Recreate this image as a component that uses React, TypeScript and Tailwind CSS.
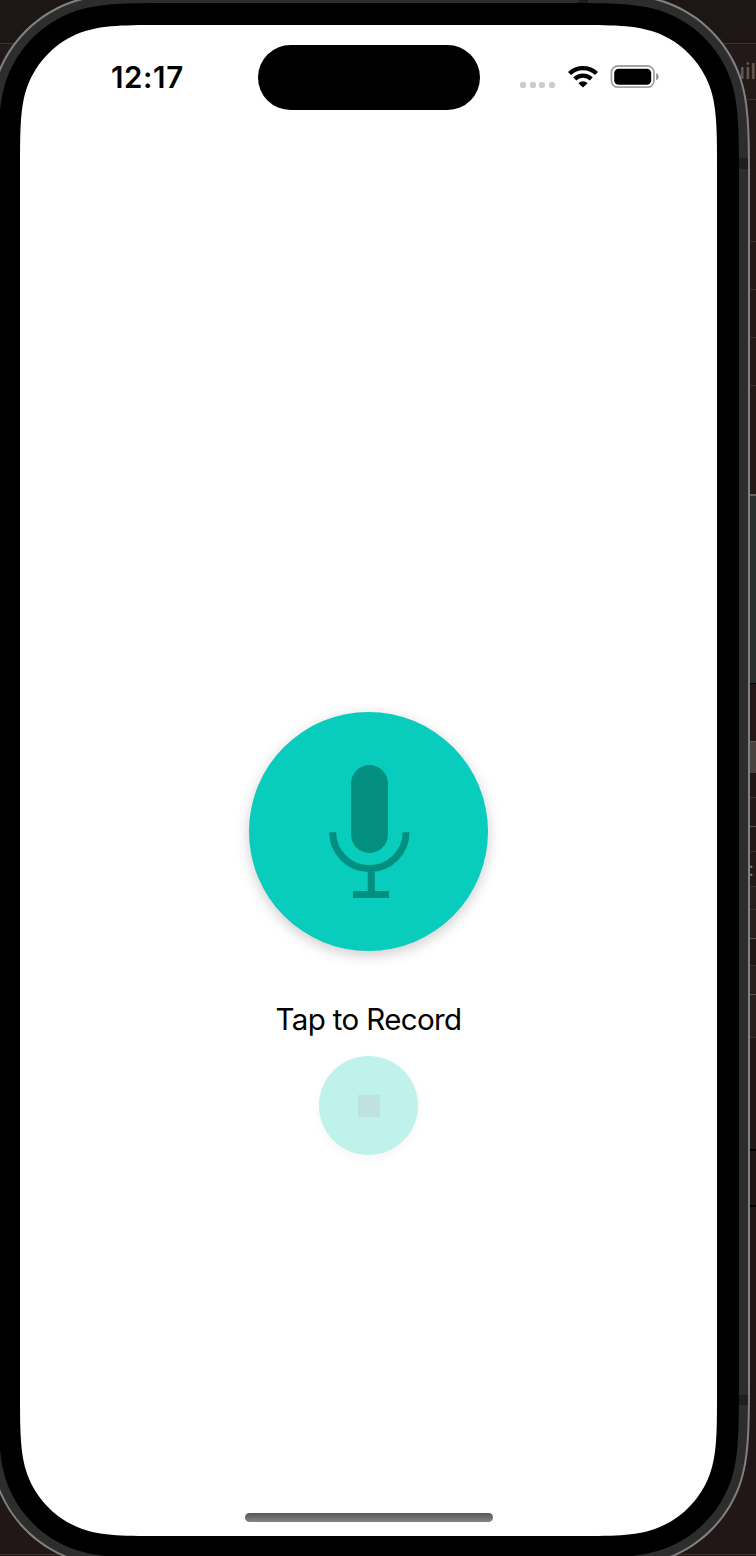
import React from "react";

// Rounded rectangle with continuous-curvature corners, as a clip-path value.
function squircle(w: number, h: number, r: number): string {
  const a = 1.5 * r, b = 1.08 * r, c = 0.84 * r;
  const d = 0.6315 * r, e = 0.0749 * r, f = 0.3728 * r, g = 0.17 * r;
  return (
    `path("M${a} 0 L${w - a} 0 C${w - b} 0 ${w - c} 0 ${w - d} ${e} C${w - f} ${g} ${w - g} ${f} ${w - e} ${d} C${w} ${c} ${w} ${b} ${w} ${a} ` +
    `L${w} ${h - a} C${w} ${h - b} ${w} ${h - c} ${w - e} ${h - d} C${w - g} ${h - f} ${w - f} ${h - g} ${w - d} ${h - e} C${w - c} ${h} ${w - b} ${h} ${w - a} ${h} ` +
    `L${a} ${h} C${b} ${h} ${c} ${h} ${d} ${h - e} C${f} ${h - g} ${g} ${h - f} ${e} ${h - d} C0 ${h - c} 0 ${h - b} 0 ${h - a} ` +
    `L0 ${a} C0 ${b} 0 ${c} ${e} ${d} C${g} ${f} ${f} ${g} ${d} ${e} C${c} 0 ${b} 0 ${a} 0 Z")`
  );
}

const rows: [number, string][] = [
  [43, "bg-[#1e1615]"],
  [56, "bg-[#221918] border-t border-[#3a3130]"],
  [142, "bg-[#231917] border-t border-[#3a3130]"],
  [48, "bg-[#231917] border-t border-[#3a3130]"],
  [48, "bg-[#231917] border-t border-[#3a3130]"],
  [48, "bg-[#231917] border-t border-[#3a3130]"],
  [109, "bg-[#231917] border-t border-[#3a3130]"],
  [189, "bg-[#2c2d2d] border-t-2 border-[#626262]"],
  [58, "bg-[#231817] border-t border-black"],
  [32, "bg-[#4a423f] border-t border-[#635b58]"],
  [24, "bg-[#211716]"],
  [29, "bg-[#231918] border-t border-[#3a3130]"],
  [25, "bg-[#231918] border-t border-[#5a5250]"],
  [35, "bg-[#231918] border-t border-[#3a3130]"],
  [23, "bg-[#281e1c] border-t border-[#3a3130]"],
  [29, "bg-[#281e1c] border-t border-[#3a3130]"],
  [27, "bg-[#211716] border-t border-[#5a5250]"],
  [29, "bg-[#281e1c] border-t border-[#3a3130]"],
  [43, "bg-[#281e1c] border-t border-[#5a5250]"],
  [112, "bg-[#211716] border-t border-[#3a3130]"],
  [56, "bg-[#1e1514] border-t-2 border-black"],
  [349, "bg-[#201716] border-t-2 border-black"],
  [2, "bg-[#241a17] border-t border-[#3a3130]"],
];

function Backdrop() {
  return (
    <div className="flex w-full flex-col">
      {rows.map(([h, cls], i) => (
        <div key={i} className={"flex w-full shrink-0 justify-end overflow-hidden " + cls} style={{ height: h }}>
          {i === 1 && <span className="mt-[13px] text-[22px] leading-[28px] font-medium text-[#625957]">uil</span>}
          {i === 13 && <span className="mt-[3px] mr-[2px] text-[20px] leading-[28px] text-[#77706e]">:</span>}
        </div>
      ))}
    </div>
  );
}

function StatusBar() {
  return (
    <div className="flex h-[104px] w-full shrink-0 items-start">
      <div className="ml-[91px] mt-[34px] w-[146.5px] text-[29.5px] leading-9 font-semibold tracking-[0.6px] text-black">12:17</div>
      <div className="mt-[19.5px] h-[65.5px] w-[222px] rounded-full bg-black" />
      <div className="ml-[40.5px] mt-[57px] flex gap-[3.5px]">
        {[0, 1, 2, 3].map((i) => (
          <span key={i} className="size-[6px] rounded-[2px] bg-[#cccccc]" />
        ))}
      </div>
      <svg className="ml-[12.5px] mt-[40px] h-[24px] w-[32px]" viewBox="0 0 32 24" fill="none" stroke="#000" strokeWidth="4.3">
        <path d="M2.5 8.5A19.6 19.6 0 0 1 29.5 8.5" />
        <path d="M7.7 13.9A12.2 12.2 0 0 1 24.3 13.9" />
        <path d="M16 22.6L11.4 18.2A6.4 6.4 0 0 1 20.6 18.2Z" fill="#000" stroke="none" />
      </svg>
      <svg className="ml-[11px] mt-[39px] h-[26px] w-[52px]" viewBox="0 0 52 26">
        <rect x="1.4" y="2" width="42.6" height="21.2" rx="6.6" fill="none" stroke="#a3a3a3" strokeWidth="1.8" />
        <rect x="4.2" y="4.7" width="37" height="16" rx="4.4" fill="#000" />
        <path d="M46.2 9V16.5Q48.7 15.4 48.7 12.7Q48.7 10 46.2 9Z" fill="#8d8d8d" />
      </svg>
    </div>
  );
}

export default function App() {
  return (
    <div className="relative h-[1556px] w-[756px] overflow-hidden bg-[#211817] font-['Inter',sans-serif]">
      <Backdrop />
      <div className="absolute -left-[13px] -top-[8px] h-[1577px] w-[763px] bg-[#818181] p-[2px]" style={{ clipPath: squircle(763, 1577, 131) }}>
        <div className="relative h-[1573px] w-[759px] bg-[#2d2d2d] pl-[9px] pt-[9px]" style={{ clipPath: squircle(759, 1573, 129) }}>
          <span className="absolute right-0 top-[164px] h-[11px] w-3 bg-[#1e1e1e]" />
          <span className="absolute right-0 top-[1401px] h-[10px] w-3 bg-[#1e1e1e]" />
          <span className="absolute left-[589px] top-0 h-[12px] w-[10px] bg-[#1e1e1e]" />
          <div className="relative h-[1555px] w-[741px] bg-black pl-[22px] pt-[22px]" style={{ clipPath: squircle(741, 1555, 119) }}>
            <main className="flex h-[1511px] w-[697px] flex-col items-center bg-white" style={{ clipPath: squircle(697, 1511, 97.5) }}>
              <StatusBar />
              <button aria-label="Record" className="mt-[583px] flex size-[239px] shrink-0 justify-center rounded-full bg-[#08ccbc] shadow-[0_4px_14px_rgba(0,0,0,0.2)]">
                <svg className="mt-[53px] h-[134px] w-[83px]" viewBox="0 0 83 134" fill="none">
                  <rect x="24" y="0" width="37" height="88" rx="18.5" fill="#028f80" />
                  <path d="M5.7 67.3A36.7 36.2 0 0 0 79.1 67.3" stroke="#028f80" strokeWidth="7" />
                  <path d="M44.3 104V130M26 129.5H62" stroke="#028f80" strokeWidth="7" />
                </svg>
              </button>
              <div className="mt-[50px] text-[29.5px] leading-9 tracking-[-0.62px] text-black">Tap to Record</div>
              <button aria-label="Stop" className="mt-[19.4px] flex size-[99px] shrink-0 items-center justify-center rounded-full bg-[#c0f2ec] shadow-[0_4px_10px_rgba(0,0,0,0.04)]">
                <span className="size-[22px] bg-[#bfe2de]" />
              </button>
              <div className="mt-[357.6px] h-[9px] w-[248px] shrink-0 rounded-full bg-gradient-to-b from-[#565656] to-[#858585]" />
            </main>
          </div>
        </div>
      </div>
    </div>
  );
}
